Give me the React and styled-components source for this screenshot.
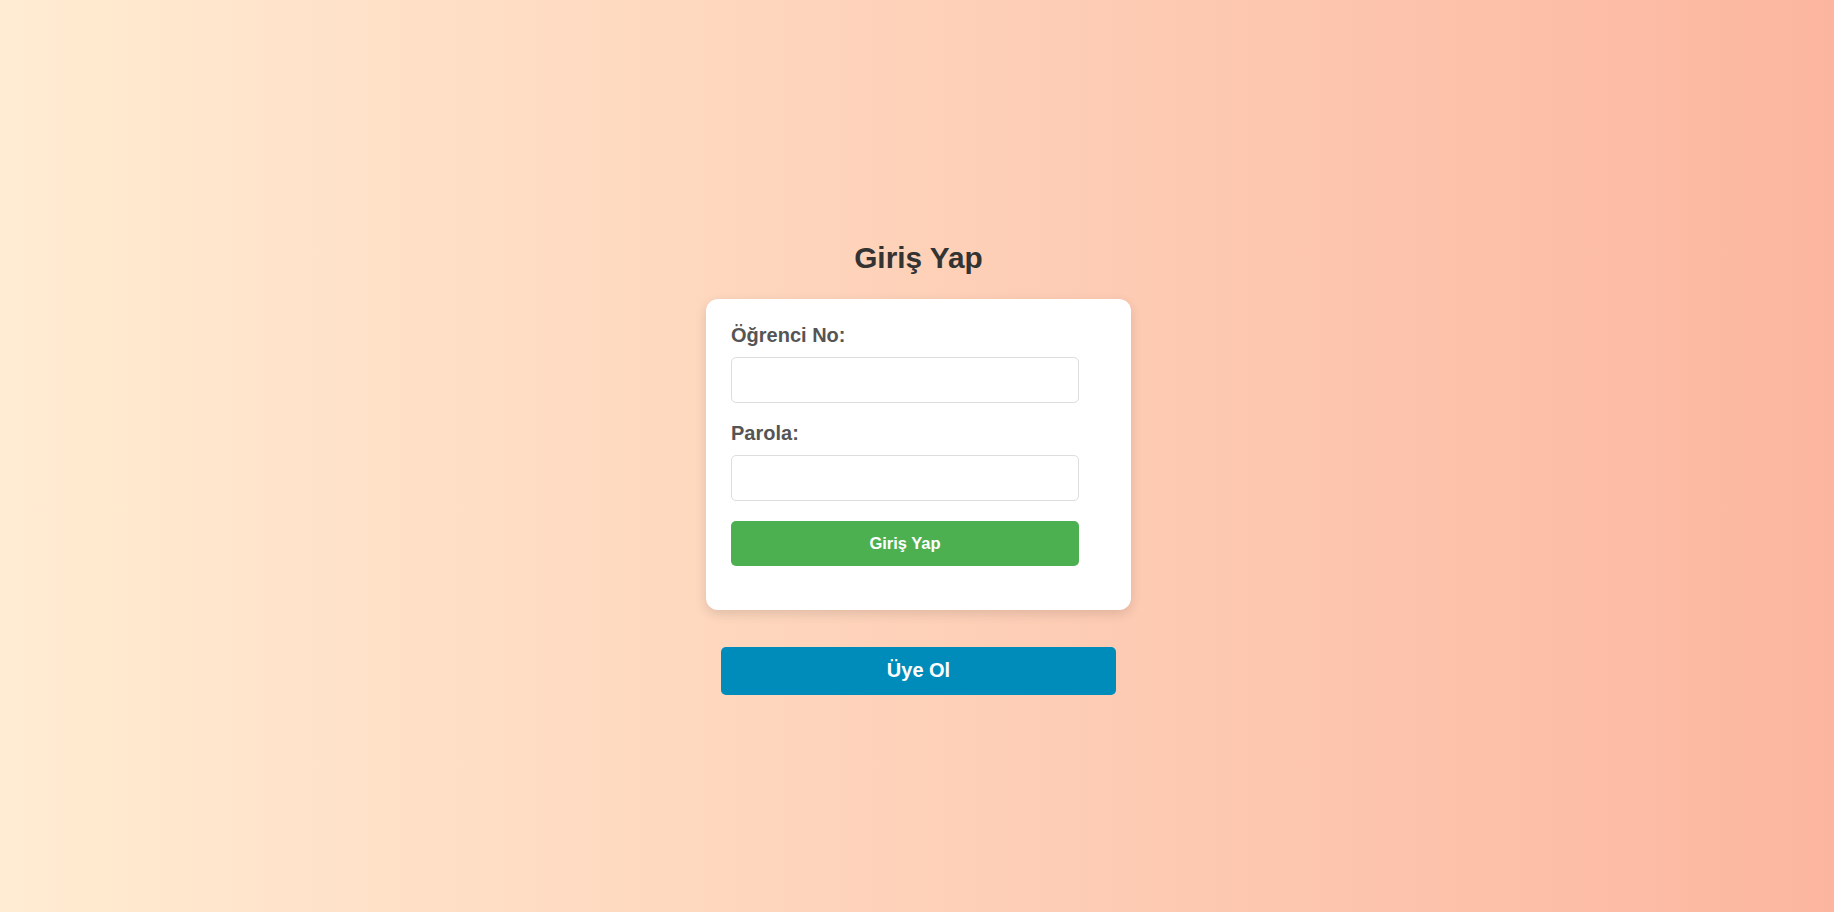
import React from "react";
import styled, { createGlobalStyle } from "styled-components";

const GlobalStyle = createGlobalStyle`
  html, body {
    margin: 0;
    padding: 0;
  }
  body {
    font-family: "Liberation Sans", Arial, sans-serif;
    background: linear-gradient(to right, #ffecd2 0%, #fcb69f 100%);
    min-height: 100vh;
  }
  * { box-sizing: border-box; }
`;

const Page = styled.div`
  height: 100vh;
  display: flex;
  flex-direction: column;
  align-items: center;
  justify-content: center;
  padding-top: 23px;
  padding-left: 3px;
`;

const Title = styled.h2`
  margin: 0 0 25px;
  font-size: 29.8px;
  line-height: 33px;
  font-weight: bold;
  color: #333;
`;

const Card = styled.div`
  width: 425px;
  background: #fff;
  border-radius: 12px;
  padding: 25px;
  box-shadow: 0 4px 12px rgba(0, 0, 0, 0.12);
`;

const Form = styled.form`
  display: flex;
  flex-direction: column;
  align-items: flex-start;
`;

const Label = styled.label`
  display: block;
  font-size: 20px;
  line-height: 22px;
  font-weight: bold;
  color: #555;
  margin-bottom: 11px;
`;

const Input = styled.input`
  width: 348px;
  height: 46px;
  border: 1px solid #ddd;
  border-radius: 5px;
  padding: 0 10px;
  font-size: 16px;
  font-family: inherit;
  background: #fff;
  margin-bottom: ${(p) => p.$mb}px;
  outline: none;
`;

const Button = styled.button`
  width: ${(p) => p.$w}px;
  height: ${(p) => p.$h}px;
  border: none;
  border-radius: 5px;
  background: ${(p) => p.$bg};
  color: #fff;
  font-family: inherit;
  font-weight: bold;
  font-size: ${(p) => p.$fs}px;
  cursor: pointer;
  margin: ${(p) => p.$m || 0};
`;

export default function App() {
  return (
    <>
      <GlobalStyle />
      <Page>
        <Title>Giriş Yap</Title>
        <Card>
          <Form onSubmit={(e) => e.preventDefault()}>
            <Label htmlFor="ogrno">Öğrenci No:</Label>
            <Input id="ogrno" type="text" $mb={19} />
            <Label htmlFor="parola">Parola:</Label>
            <Input id="parola" type="password" $mb={20} />
            <Button type="submit" $w={348} $h={45} $bg="#4caf50" $fs={16.5} $m="0 0 19px">
              Giriş Yap
            </Button>
          </Form>
        </Card>
        <Button type="button" $w={395} $h={48} $bg="#008cba" $fs={20} $m="37px 0 0">
          Üye Ol
        </Button>
      </Page>
    </>
  );
}
